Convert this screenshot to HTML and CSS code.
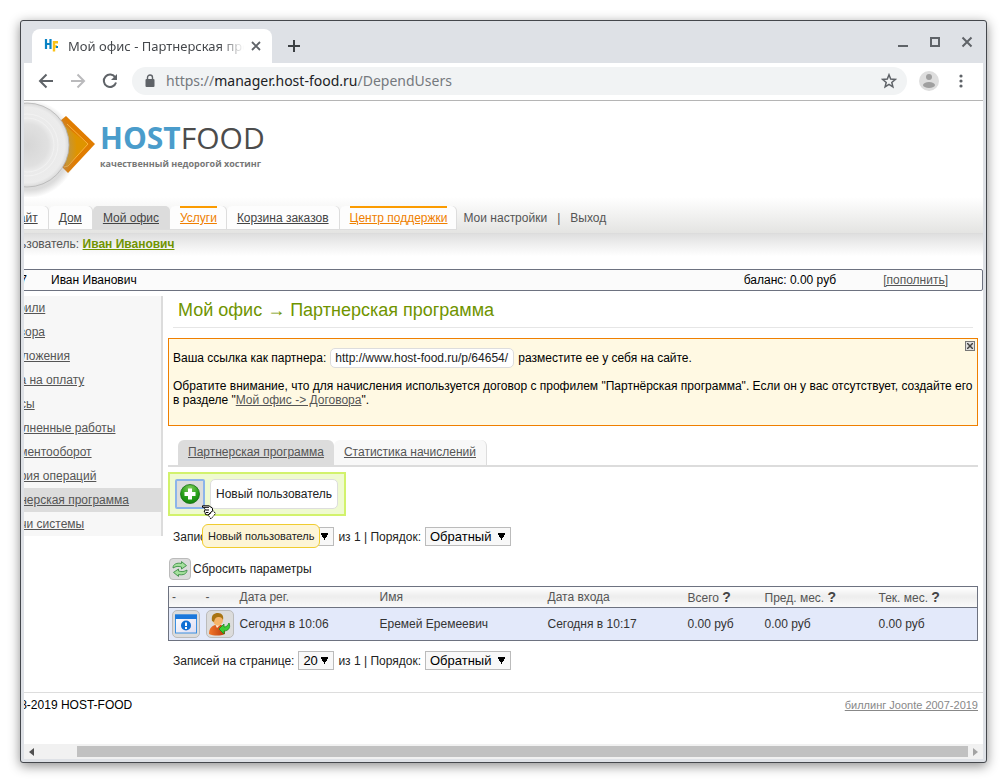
FILE: index.html
```html
<!DOCTYPE html>
<html lang="ru">
<head>
<meta charset="utf-8">
<title>Мой офис - Партнерская программа</title>
<link rel="stylesheet" href="styles.css">
</head>
<body>
<div class="window">
  <div class="tabstrip">
    <div class="tab">
      <svg class="favicon" viewBox="0 0 16 16"><path d="M2 1v10M6.500 1v10M2 6h4" fill="none" stroke="#0a83c4" stroke-width="2.200"/><path d="M10 3v10.500M9 4.200h5M10 8.500h3" fill="none" stroke="#fbc21a" stroke-width="2.400"/><path d="M12 8h2v2h-2z" fill="#0a83c4"/></svg>
      <span class="tab-title">Мой офис - Партнерская программа</span>
      <button class="icon-btn" aria-label="Закрыть вкладку"><svg width="10" height="10" viewBox="0 0 10 10"><path d="M1 1l8 8M9 1l-8 8" stroke="#5f6368" stroke-width="1.800"/></svg></button>
    </div>
    <button class="icon-btn new-tab" aria-label="Новая вкладка"><svg width="12" height="12" viewBox="0 0 12 12"><path d="M6 0v12M0 6h12" stroke="#3c4043" stroke-width="2"/></svg></button>
    <div class="window-controls">
      <button class="icon-btn" aria-label="Свернуть"><svg width="12" height="12" viewBox="0 0 12 12"><path d="M1 10h10" stroke="#5f6368" stroke-width="2"/></svg></button>
      <button class="icon-btn" aria-label="Развернуть"><svg width="12" height="12" viewBox="0 0 12 12"><path d="M2 2h8v8H2z" fill="none" stroke="#5f6368" stroke-width="2"/></svg></button>
      <button class="icon-btn" aria-label="Закрыть"><svg width="12" height="12" viewBox="0 0 12 12"><path d="M1.500 1.500l9 9M10.500 1.500l-9 9" stroke="#5f6368" stroke-width="2"/></svg></button>
    </div>
  </div>
  <div class="toolbar">
    <button class="icon-btn" aria-label="Назад"><svg width="16" height="16" viewBox="0 0 16 16"><path d="M15 8H2M8.500 1.500L2 8l6.500 6.500" fill="none" stroke="#5f6368" stroke-width="2"/></svg></button>
    <button class="icon-btn" aria-label="Вперед"><svg width="16" height="16" viewBox="0 0 16 16"><path d="M1 8h13M7.500 1.500L14 8l-6.500 6.500" fill="none" stroke="#bababc" stroke-width="2"/></svg></button>
    <button class="icon-btn" aria-label="Обновить"><svg width="16" height="16" viewBox="0 0 16 16"><path d="M13.300 4.500A6.200 6.200 0 1 0 14 9.500" fill="none" stroke="#5f6368" stroke-width="2"/><path d="M15 1v6H9z" fill="#5f6368"/></svg></button>
    <div class="omnibox">
      <svg width="10" height="14" viewBox="0 0 10 14"><rect x="0.500" y="5" width="9" height="8" rx="1" fill="#5f6368"/><path d="M2.500 5V3.500a2.500 2.500 0 0 1 5 0V5" fill="none" stroke="#5f6368" stroke-width="1.400"/></svg>
      <div class="url">https://<span class="host">manager.host-food.ru</span>/DependUsers</div>
      <button class="icon-btn" aria-label="Закладка"><svg width="16" height="16" viewBox="0 0 16 16"><path d="M8 1.800l1.700 4.300 4.600.3-3.500 3 1.100 4.500L8 11.400l-3.900 2.500 1.100-4.500-3.500-3 4.600-.3z" fill="none" stroke="#5f6368" stroke-width="1.500"/></svg></button>
    </div>
    <button class="icon-btn avatar" aria-label="Профиль"><svg width="20" height="20" viewBox="0 0 20 20"><circle cx="10" cy="10" r="10" fill="#dedede"/><circle cx="10" cy="6" r="3" fill="#a0a0a0"/><ellipse cx="10" cy="14" rx="6" ry="3" fill="#a0a0a0"/></svg></button>
    <button class="icon-btn" aria-label="Меню"><svg width="4" height="14" viewBox="0 0 4 14"><g fill="#5f6368"><circle cx="2" cy="2" r="1.600"/><circle cx="2" cy="7" r="1.600"/><circle cx="2" cy="12" r="1.600"/></g></svg></button>
  </div>

  <div class="viewport">
    <div class="page">
      <header class="site-header">
        <a class="logo" href="#" aria-label="HOSTFOOD">
          <svg class="plate" width="111" height="102" viewBox="0 0 111 102">
            <defs>
              <radialGradient id="dish"><stop offset="0" stop-color="#d6d6d6"/><stop offset=".5" stop-color="#e0e0e0"/><stop offset=".62" stop-color="#eaeaea"/><stop offset=".9" stop-color="#ececec"/><stop offset="1" stop-color="#dadada"/></radialGradient>
              <radialGradient id="shade"><stop offset=".84" stop-color="#999" stop-opacity=".35"/><stop offset="1" stop-color="#999" stop-opacity="0"/></radialGradient>
            </defs>
            <path d="M82 15l29 28-27 29-8-8V20z" fill="#e07c00"/>
            <path d="M80 24l24 19-22 23z" fill="#de9400"/>
            <path d="M83 23l21 20-20 22-4 1" fill="none" stroke="#fbb53d"/>
            <circle cx="44" cy="48" r="49" fill="url(#shade)"/>
            <circle cx="43" cy="44" r="42" fill="url(#dish)" stroke="#b4b4b4" stroke-width=".8"/>
            <circle cx="43" cy="44" r="31" fill="none" stroke="#f4f4f4" stroke-width=".8"/>
            <circle cx="43" cy="44" r="27" fill="none" stroke="#f2f2f2" stroke-width=".8"/>
          </svg>
          <span class="logo-text"><span class="logo-name"><b>HOST</b>FOOD</span><span class="logo-slogan">качественный недорогой хостинг</span></span>
        </a>
        <nav class="main-nav">
          <a class="nav-tab" href="#"><span>Сайт</span></a>
          <a class="nav-tab" href="#"><span>Дом</span></a>
          <a class="nav-tab current" href="#"><span>Мой офис</span></a>
          <a class="nav-tab hot" href="#"><span>Услуги</span></a>
          <a class="nav-tab" href="#"><span>Корзина заказов</span></a>
          <a class="nav-tab hot" href="#"><span>Центр поддержки</span></a>
          <a class="nav-link" href="#">Мои настройки</a><span class="nav-sep">|</span><a class="nav-link" href="#">Выход</a>
        </nav>
        <div class="user-line">Пользователь: <a href="#">Иван Иванович</a></div>
      </header>

      <div class="account-bar">
        <span class="account-id">64657</span>
        <span class="account-name">Иван Иванович</span>
        <span class="account-balance">баланс: 0.00 руб</span>
        <a href="#">[пополнить]</a>
      </div>

      <div class="columns">
        <aside class="side-menu">
          <a href="#">Профили</a>
          <a href="#">Договора</a>
          <a href="#">Предложения</a>
          <a href="#">Счета на оплату</a>
          <a href="#">Бонусы</a>
          <a href="#">Выполненные работы</a>
          <a href="#">Документооборот</a>
          <a href="#">История операций</a>
          <a class="current" href="#">Партнерская программа</a>
          <a href="#">Задачи системы</a>
        </aside>
        <main class="content">
          <h1>Мой офис → Партнерская программа</h1>
          <section class="notice">
            <button class="notice-close" aria-label="Закрыть"><svg width="6" height="6" viewBox="0 0 6 6"><path d="M0 0l6 6M6 0L0 6" stroke="#444" stroke-width="1.500"/></svg></button>
            <div class="ref-row"><label for="ref">Ваша ссылка как партнера:</label><input id="ref" class="ref-input" value="http://www.host-food.ru/p/64654/" readonly><span>разместите ее у себя на сайте.</span></div>
            <p>Обратите внимание, что для начисления используется договор с профилем "Партнёрская программа". Если он у вас отсутствует, создайте его в разделе "<a href="#">Мой офис -&gt; Договора</a>".</p>
          </section>

          <nav class="sub-tabs">
            <a class="current" href="#">Партнерская программа</a>
            <a href="#">Статистика начислений</a>
          </nav>

          <div class="add-panel">
            <button class="add-btn" aria-label="Новый пользователь">
              <svg width="20" height="20" viewBox="0 0 20 20"><defs><radialGradient id="green" cx=".5" cy=".2" r=".9"><stop offset="0" stop-color="#7fcb5a"/><stop offset=".5" stop-color="#2ba31c"/><stop offset="1" stop-color="#0b7a08"/></radialGradient></defs><circle cx="10" cy="10" r="9.500" fill="url(#green)" stroke="#176d12" stroke-width=".8"/><path d="M10 4.500v11M4.500 10h11" stroke="#fff" stroke-width="4"/></svg>
            </button>
            <span class="add-label">Новый пользователь</span>
            <svg class="cursor" width="16" height="15" viewBox="0 0 16 15"><path d="M1.500.8h6.500l3.500 2.500v2.500L7 10 4.500 9.500 4 7.500 3 6l1.500-.8L3.500 3.300l1-1H1.500z" fill="#fff" stroke="#000"/><path d="M4.500 2.300h3.500M5 5h3M5 7.500h2.500" stroke="#000" fill="none"/><path d="M7.500 10.500l4.500-5 2.500 3-4.500 5.500z" fill="#fff" stroke="#000" stroke-dasharray="1.400 .8"/></svg>
            <div class="tooltip" role="tooltip">Новый пользователь</div>
          </div>

          <div class="pager pager-top">
            <label for="n1">Записей на странице:</label>
            <select id="n1" class="select-count"><option>20</option></select>
            <label for="o1">из 1 | Порядок:</label>
            <select id="o1" class="select-order"><option>Обратный</option></select>
          </div>

          <div class="reset-row">
            <button id="reset" class="reset-btn" aria-label="Сбросить параметры"><svg width="16" height="16" viewBox="0 0 16 16"><g fill="#a4e09c" stroke="#3c8f45" stroke-width=".9" stroke-linejoin="round"><path d="M1 7c0-4 4-5.500 8.500-4.500V.6l5 4-5 3.400V6C6 5 4 5.200 1 7z"/><path d="M15 9c0 4-4 5.500-8.500 4.500v1.900l-5-4L6.500 8v2c3.500 1 5.500.8 8.500-1z"/></g></svg></button>
            <label for="reset">Сбросить параметры</label>
          </div>

          <table class="users">
            <colgroup><col class="c-icon"><col class="c-icon"><col class="c-reg"><col class="c-name"><col class="c-login"><col class="c-total"><col class="c-prev"><col class="c-cur"></colgroup>
            <thead><tr><th>-</th><th>-</th><th>Дата рег.</th><th>Имя</th><th>Дата входа</th><th>Всего <b>?</b></th><th>Пред. мес. <b>?</b></th><th>Тек. мес. <b>?</b></th></tr></thead>
            <tbody><tr>
              <td><button class="row-btn" aria-label="Информация"><svg width="22" height="20" viewBox="0 0 22 20"><defs><linearGradient id="wf" x1="0" y1="0" x2="1" y2="1"><stop offset="0" stop-color="#fff"/><stop offset="1" stop-color="#dcdcf2"/></linearGradient></defs><rect x=".5" y="1" width="21" height="18" fill="url(#wf)" stroke="#3c8fe0"/><path d="M0 .5h22V5H0z" fill="#1b78dc"/><circle cx="11" cy="11.500" r="5" fill="#0f6fd4"/><path d="M11 8.500v3.500M11 13v2" stroke="#fff" stroke-width="2"/></svg></button></td>
              <td><button class="row-btn" aria-label="Войти"><svg width="23" height="23" viewBox="0 0 23 23"><defs><linearGradient id="bd" x1="0" x2="1"><stop offset="0" stop-color="#f2762a"/><stop offset="1" stop-color="#b93a0c"/></linearGradient></defs><path d="M1 21c0-6 3-8 6-9h6c3 1 4 4 4 9-5 2-11 2-16 0z" fill="url(#bd)"/><path d="M7 11l2 4 4-4z" fill="#fff0dc"/><ellipse cx="10" cy="7" rx="5" ry="5.800" fill="#f6b56a"/><path d="M4 8C3 2 6 0 10 0c4 0 6 3 5 7-1-2-2-3-4-3-3 0-4 1-5 5z" fill="#a87412"/><path d="M11 16l5-5v3c3 0 4-2 5-4 2 5-1 8-5 8v3z" fill="#3ccc35" stroke="#168a1c" stroke-width=".8"/></svg></button></td>
              <td>Сегодня в 10:06</td><td>Еремей Еремеевич</td><td>Сегодня в 10:17</td><td>0.00 руб</td><td>0.00 руб</td><td>0.00 руб</td>
            </tr></tbody>
          </table>

          <div class="pager pager-bottom">
            <label for="n2">Записей на странице:</label>
            <select id="n2" class="select-count"><option>20</option></select>
            <label for="o2">из 1 | Порядок:</label>
            <select id="o2" class="select-order"><option>Обратный</option></select>
          </div>
        </main>
      </div>

      <footer class="site-footer"><span>© 2008-2019 HOST-FOOD</span><a href="#">биллинг Joonte 2007-2019</a></footer>
    </div>
    <div class="scrollbar">
      <svg width="5" height="8" viewBox="0 0 5 8"><path d="M5 0v8L0 4z" fill="#505050"/></svg>
      <div class="track"><div class="thumb"></div></div>
      <svg width="5" height="8" viewBox="0 0 5 8"><path d="M0 0v8l5-4z" fill="#a3a3a3"/></svg>
    </div>
  </div>
</div>
</body>
</html>
```
FILE: styles.css
```css
* { box-sizing: border-box; }
body {
  margin: 0;
  height: 100vh;
  padding: 20px;
  background: #fff;
  font: 12px/14px "Liberation Sans", Arial, sans-serif;
  color: #000;
}
button { font: inherit; padding: 0; border: 0; background: none; display: flex; align-items: center; justify-content: center; }
a { color: #555; }
svg { display: block; flex: none; }

.window {
  display: flex;
  flex-direction: column;
  height: 100%;
  border: 1px solid #44474c;
  border-radius: 3px;
  background: #dee1e6;
  padding: 0 3px 3px;
  box-shadow: 0 3px 12px rgba(0, 0, 0, .45);
}
.icon-btn { width: 16px; height: 20px; flex: none; }

/* Tab strip */
.tabstrip { display: flex; align-items: flex-end; height: 42px; padding-left: 8px; }
.tab {
  display: flex; align-items: center;
  width: 240px; height: 34px;
  padding: 0 8px 0 12px;
  border-radius: 8px 8px 0 0;
  background: #fff;
}
.favicon { width: 16px; height: 16px; margin-right: 8px; }
.tab-title {
  flex: 1; overflow: hidden; white-space: nowrap;
  font: 13px/20px "Noto Sans", sans-serif; color: #45484c;
  -webkit-mask-image: linear-gradient(90deg, #000 86%, transparent);
  mask-image: linear-gradient(90deg, #000 86%, transparent);
}
.tab .icon-btn { margin-left: 4px; }
.new-tab { margin: 0 0 7px 14px; }
.window-controls { display: flex; gap: 16px; margin: 0 8px 11px auto; }

/* Toolbar */
.toolbar {
  display: flex; align-items: center; gap: 16px;
  flex: none; height: 38px; padding: 0 14px 2px;
  background: #fff; border-bottom: 1px solid #b5b5b5;
}
.omnibox {
  flex: 1; display: flex; align-items: center;
  height: 28px; padding: 0 10px 0 13px;
  border-radius: 14px; background: #f1f3f4;
  margin: 0 -4px 0 -2px;
}
.url { flex: 1; margin-left: 11px; font: 14px/24px "Noto Sans", sans-serif; color: #75797e; }
.host { color: #202124; }
.avatar { width: 20px; margin-right: -2px; }

/* Page */
.viewport { flex: 1; display: flex; flex-direction: column; overflow: hidden; background: #fff; }
.page { flex: 1; margin-left: -40px; }
.site-header { display: flex; flex-direction: column; }
.logo { display: flex; height: 95px; text-decoration: none; }
.plate { overflow: visible; }
.logo-text { display: flex; flex-direction: column; margin: 17px 0 0 5px; }
.logo-name { font: 30px/40px "Open Sans", sans-serif; color: #4c4c4c; }
.logo-name b { color: #4a9ccb; }
.logo-slogan { font: bold 9px/12px "Open Sans", sans-serif; color: #777; }

.main-nav {
  display: flex; align-items: flex-end;
  height: 37px; padding: 0 0 3px 16px; margin-top: 1px;
  background: linear-gradient(#fff, #e4e4e2);
  border-bottom: 1px solid #dcdcdc;
}
.nav-tab {
  display: flex; height: 24px; padding: 0 10px; margin-right: 1px;
  border-radius: 5px 5px 0 0; background: #fdfdfd;
  border-bottom: 1px solid #ddd;
  box-shadow: 1px 0 0 #ddd;
  color: #444;
}
.nav-tab span { border-top: 2px solid transparent; line-height: 20px; white-space: nowrap; }
.nav-tab.current { background: #dcdcdc; }
.nav-tab.hot { padding-right: 9px; color: #ef7f00; }
.nav-tab.hot span { border-top-color: #fb9b00; }
.nav-link { color: #555; text-decoration: none; line-height: 24px; margin-left: 6px; }
.nav-sep { line-height: 24px; color: #555; margin: 0 4px 0 10px; }
.user-line {
  height: 22px; padding: 3px 0 0 14px; color: #555;
  background: linear-gradient(#dfdfdf, #fff);
}
.user-line a { color: #709400; font-weight: bold; }

.account-bar {
  display: flex; align-items: center;
  height: 22px; margin-top: 13px; padding-right: 34px;
  border: 1px solid #6d7280; border-radius: 2px; background: #fbfbfb;
}
.account-id { width: 42px; text-align: right; margin-right: 24px; }
.account-balance { margin: 0 47px 0 auto; }

.columns { display: flex; margin-top: 5px; }
.side-menu {
  display: flex; flex-direction: column; align-self: flex-start;
  width: 179px; flex: none;
  background: #f7f7f7; border-right: 2px solid #dcdcdc;
}
.side-menu a { padding-left: 9px; line-height: 24px; }
.side-menu .current { background: #dcdcdc; }

.content { flex: 1; min-width: 0; padding: 0 5px; }
h1 {
  margin: 0 5px; padding: 0 5px 2px;
  border-bottom: 1px solid #e6e6e6;
  font: 18px/29px "Liberation Sans", Arial, sans-serif; color: #6f9400;
}
.notice {
  position: relative;
  margin-top: 10px; padding: 9px 4px 18px;
  border: 1px solid #ef7f00; background: #fff9e3;
}
.notice p { margin: 11px 0 0; }
.notice-close {
  position: absolute; top: 2px; right: 2px; width: 10px; height: 10px;
  border: 1px solid #777; background: #ddd;
}
.ref-row { display: flex; align-items: center; gap: 4px; }
.ref-input {
  width: 184px; height: 20px; padding: 0 4px;
  border: 1px solid #ddd; border-radius: 5px; background: #fff;
  font: inherit; color: #222;
}

.sub-tabs {
  display: flex; margin-top: 14px; padding-left: 10px;
  border-bottom: 2px solid #dcdcdc;
}
.sub-tabs a { padding: 0 10px; line-height: 25px; border-radius: 6px 6px 0 0; background: #f8f8f8; border-right: 1px solid #ddd; }
.sub-tabs .current { background: #dcdcdc; border-right: 0; }

.add-panel {
  position: relative; display: flex; align-items: center; gap: 5px;
  width: 178px; height: 44px; margin-top: 5px; padding: 0 5px;
  border: 2px solid #d2f26c; background: #effad0;
}
.add-btn { width: 30px; height: 30px; border: 2px solid #8cb4ea; background: #dcdcdc; border-radius: 2px; }
.add-label { padding: 7px 5px; border: 1px solid #ddd; border-radius: 5px; background: #fff; color: #222; white-space: nowrap; }
.cursor { position: absolute; left: 31px; top: 31px; z-index: 2; }
.tooltip {
  position: absolute; left: 32px; top: 50px; z-index: 1;
  padding: 4px 5px; border: 1px solid #f0cc30; border-radius: 6px;
  background: #fdf5d6; color: #222; font-size: 11px; white-space: nowrap;
}

.pager { display: flex; align-items: center; gap: 4px; padding-left: 5px; color: #222; }
.pager-top { margin-top: 11px; }
.pager-bottom { margin-top: 10px; }
.pager select {
  height: 19px; padding: 0 10px 0 4px;
  border: 1px solid #bbb; border-radius: 0;
  appearance: none;
  font: 13px/17px "Liberation Sans", Arial, sans-serif; color: #000;
  background: conic-gradient(from -30deg at 50% 100%, #000 60deg, transparent 0) right 5px top 5px / 7px 7px no-repeat, #f8f8f8;
}
.pager .select-count { width: 36px; }
.select-order { width: 86px; }

.reset-row { display: flex; align-items: center; gap: 2px; margin: 12px 0 6px 1px; color: #222; }
.reset-btn { width: 22px; height: 22px; border: 1px solid #bbb; border-radius: 4px; background: #dcdcdc; }

.users { width: 100%; table-layout: fixed; border-collapse: collapse; border: 1px solid #6d7280; color: #333; }
.users th { height: 21px; padding: 0 3px; text-align: left; font-weight: normal; color: #555; white-space: nowrap; background: linear-gradient(#fff, #ededed 45%, #fafafa); }
.users th b { font-size: 14px; color: #444; }
.users td { height: 33px; padding: 0 3px; background: #e3e9fa; border-top: 1px solid #6d7280; white-space: nowrap; }
.c-icon { width: 34px; }
.c-reg { width: 140px; }
.c-name { width: 168px; }
.c-login { width: 140px; }
.c-total { width: 77px; }
.c-prev { width: 114px; }
.row-btn { width: 28px; height: 28px; border: 1px solid #bbb; border-radius: 5px; background: #dcdcdc; }

.site-footer {
  display: flex; justify-content: space-between;
  margin-top: 22px; padding: 5px 5px 0 4px;
  border-top: 1px solid #ddd;
}
.site-footer a { font-size: 11px; color: #888; }

.scrollbar { display: flex; align-items: center; justify-content: space-between; height: 15px; flex: none; padding: 0 5px; background: #f1f1f1; }
.track { flex: 1; margin: 0 5px 0 8px; }
.thumb { height: 11px; margin-left: 35px; background: #c1c1c1; }
```
